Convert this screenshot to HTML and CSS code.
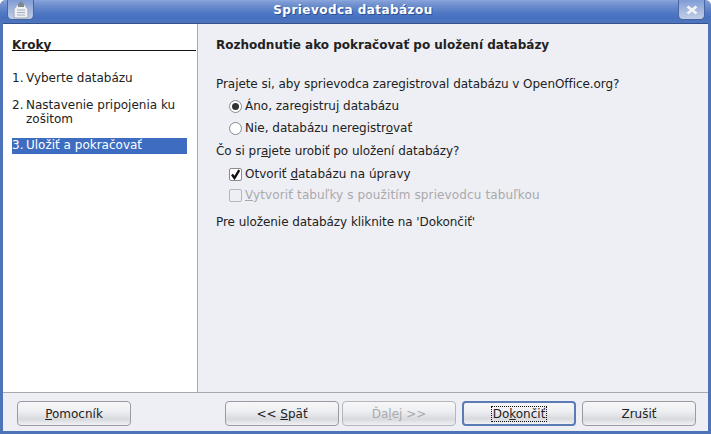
FILE: index.html
```html
<!DOCTYPE html>
<html lang="sk">
<head>
<meta charset="utf-8">
<title>Sprievodca databázou</title>
<link rel="stylesheet" href="styles.css">
</head>
<body>
<div class="window">
  <header class="titlebar">
    <div class="tb-btn tb-menu">
      <svg width="20" height="19" viewBox="0 0 20 19"><path d="M3 9 7 4 10 1 13 4 17 9V18H3Z" fill="#eceff3" stroke="#9aa6b6" stroke-width="1"/><path d="M7 4 10 1 13 4 13 7H7Z" fill="#7d8794"/><path d="M6 10h8M6 12.5h8M6 15h8" stroke="#a4aebb"/></svg>
    </div>
    <div class="tb-title">Sprievodca databázou</div>
    <div class="tb-btn tb-close">
      <svg width="14" height="10" viewBox="0 0 14 10"><path d="M2.5 1.5 11.5 8.5M11.5 1.5 2.5 8.5" stroke="#f1f3f7" stroke-width="2.8"/></svg>
    </div>
  </header>
  <div class="client">
    <div class="main">
      <aside class="roadmap">
        <div class="rm-head">Kroky</div>
        <div class="rm-item"><span class="rm-num">1.</span><span>Vyberte databázu</span></div>
        <div class="rm-item"><span class="rm-num">2.</span><span>Nastavenie pripojenia ku zošitom</span></div>
        <div class="rm-item rm-active"><span class="rm-num">3.</span><span>Uložiť a pokračovať</span></div>
      </aside>
      <section class="page">
        <h1 class="page-title">Rozhodnutie ako pokračovať po uložení databázy</h1>
        <p class="label q1">Prajete si, aby sprievodca zaregistroval databázu v OpenOffice.org?</p>
        <div class="opt"><span class="radio on"></span><span>Áno, zaregistru<u>j</u> databázu</span></div>
        <div class="opt"><span class="radio"></span><span>Nie, databázu neregistr<u>o</u>vať</span></div>
        <p class="label q2">Čo si pr<u>a</u>jete urobiť po uložení databázy?</p>
        <div class="opt"><span class="check"><svg width="11" height="11" viewBox="0 0 11 11"><path d="M2 5.5 4.5 9 9.2 1.2" fill="none" stroke="#111" stroke-width="2.4"/></svg></span><span>Otvoriť <u>d</u>atabázu na úpravy</span></div>
        <div class="opt disabled"><span class="check"></span><span><u>V</u>ytvoriť tabuľky s použitím sprievodcu tabuľkou</span></div>
        <p class="label q3">Pre uloženie databázy kliknite na 'Dokončiť'</p>
      </section>
    </div>
    <footer class="buttons">
      <button class="btn"><span><u>P</u>omocník</span></button>
      <div class="nav">
        <button class="btn"><span>&lt;&lt; <u>S</u>päť</span></button>
        <button class="btn off"><span>Ďa<u>l</u>ej &gt;&gt;</span></button>
        <button class="btn default"><span class="focus">Do<u>k</u>ončiť</span></button>
        <button class="btn"><span>Zrušiť</span></button>
      </div>
    </footer>
  </div>
</div>
</body>
</html>
```
FILE: styles.css
```css
* { box-sizing: border-box; }
html, body { margin: 0; padding: 0; }
body { width: 711px; height: 434px; overflow: hidden; background: #fff; font-family: "DejaVu Sans", sans-serif; font-size: 12px; color: #222; }
.window { width: 711px; height: 434px; display: flex; flex-direction: column; background: #4f73b8; border-radius: 6px 6px 0 0; overflow: hidden; }
.titlebar { height: 23px; flex: none; display: flex; align-items: flex-start; justify-content: space-between; padding: 0 6px 0 7px; background: linear-gradient(#8ea8dc 0, #7d9ad4 2px, #6b8ccc 6px, #4f78c4 13px, #4670bf 18px, #4f75bd 23px); }
.tb-btn { width: 27px; height: 20px; border: 1px solid #47669f; border-top: 0; border-radius: 0 0 5px 5px; display: flex; align-items: center; justify-content: center; background: linear-gradient(#7f9cd6, #a9bbdf 60%, #c0cde6); }
.tb-title { flex: 1; text-align: center; color: #fff; font-weight: bold; font-size: 12px; line-height: 21px; letter-spacing: 0.45px; text-shadow: 1px 1px 0 #2d4f90; transform: translateX(-3px); }
.client { flex: 1; margin: 0 3px 3px; border-top: 1px solid #35528c; background: #eeeff4; display: flex; flex-direction: column; min-height: 0; }
.main { flex: 1; display: flex; border-bottom: 1px solid #a9aaad; min-height: 0; }
.roadmap { width: 195px; flex: none; background: #fff; border-right: 1px solid #a9aaad; padding: 14px 0 0 9px; }
.rm-head { width: 184px; height: 13px; font-weight: bold; line-height: 15px; border-bottom: 1px solid #111; margin-bottom: 20px; }
.rm-item { display: flex; width: 175px; line-height: 14px; margin-bottom: 13px; }
.rm-num { width: 14px; flex: none; }
.rm-active { background: #3d6cc0; color: #fff; height: 16px; margin-top: -1px; line-height: 15px; }
.page { flex: 1; padding: 14px 0 0 18px; }
.page-title { margin: 0 0 24px; font-size: 12px; font-weight: bold; line-height: 15px; }
.label { margin: 0; line-height: 15px; height: 15px; white-space: nowrap; letter-spacing: -0.06px; }
.q1 { margin-bottom: 3px; }
.q2 { margin-top: 5px; margin-bottom: 4px; }
.q3 { margin-top: 9px; }
.opt { display: flex; align-items: center; height: 22px; padding-left: 13px; gap: 3px; white-space: nowrap; }
.disabled { color: #a9a9ac; letter-spacing: 0.125px; margin-top: -1px; }
.radio { width: 13px; height: 13px; border: 1px solid #888b90; border-radius: 50%; background: #fff; display: flex; align-items: center; justify-content: center; }
.radio.on::after { content: ""; width: 7px; height: 7px; border-radius: 50%; background: #333; }
.check { width: 13px; height: 13px; border: 1px solid #888b90; border-radius: 2px; background: #fff; display: flex; align-items: center; justify-content: center; }
.disabled .check { background: #eeeff4; border-color: #b5b6ba; }
.buttons { height: 38px; flex: none; display: flex; justify-content: space-between; align-items: flex-start; padding: 8px 12px 0 14px; }
.nav { display: flex; gap: 3px; }
.btn { width: 114px; height: 25px; padding: 0; border: 1px solid #999ba0; border-radius: 4px; font: 12px "DejaVu Sans", sans-serif; color: #222; background: linear-gradient(#f7f7f9, #eeeff2 40%, #d9dade 75%, #f0f1f3); display: flex; align-items: center; justify-content: center; }
.off { color: #a9a9ac; border-color: #b5b6ba; }
.default { border: 2px solid #5b7bb5; margin-left: 3px; margin-right: 3px; }
.focus { outline: 1px dotted #111; padding: 0 1px; }
```
